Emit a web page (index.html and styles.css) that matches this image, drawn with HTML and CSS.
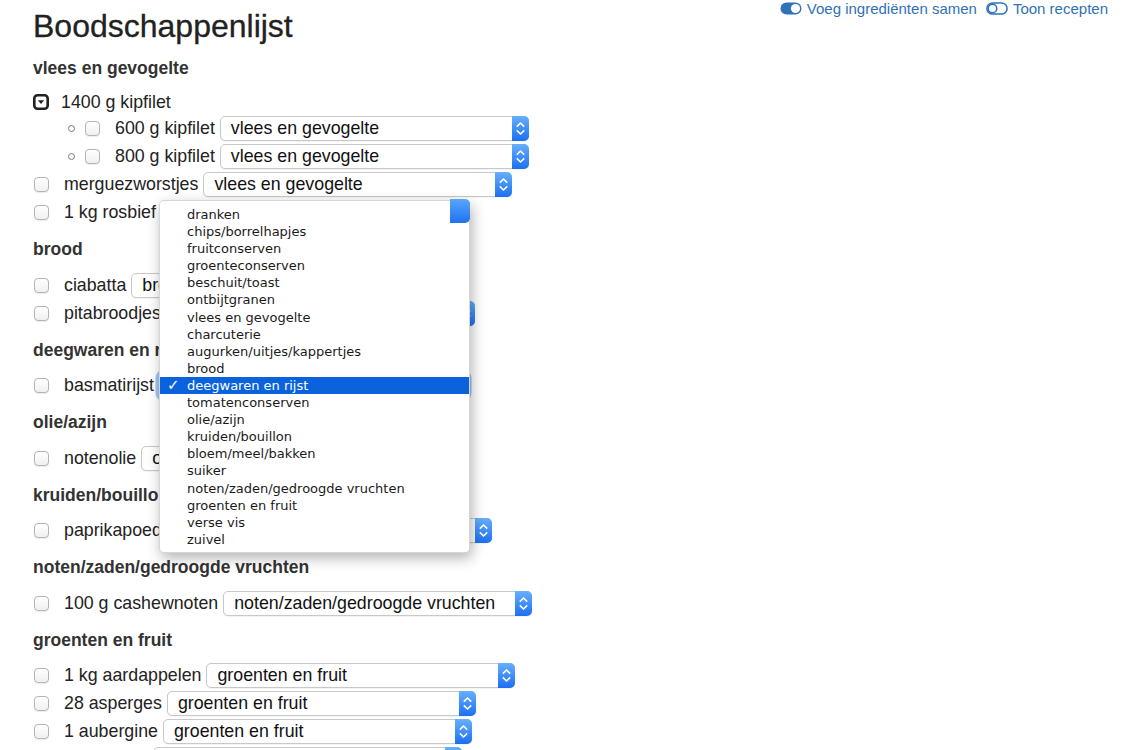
FILE: index.html
```html
<!DOCTYPE html>
<html lang="nl">
<head>
<meta charset="utf-8">
<title>Boodschappenlijst</title>
<link rel="stylesheet" href="styles.css">
</head>
<body>
<div class="page">
  <header class="top">
    <h1 class="title">Boodschappenlijst</h1>
    <div class="toggles">
      <span class="tg">
        <svg class="tg-icon" width="22" height="13" viewBox="0 0 22 13"><rect x="0.5" y="0.5" width="21" height="12" rx="6" fill="#3072b9"/><circle cx="15.5" cy="6.5" r="4.6" fill="#fff"/></svg>
        Voeg ingrediënten samen
      </span>
      <span class="tg">
        <svg class="tg-icon" width="22" height="13" viewBox="0 0 22 13"><rect x="0.9" y="0.9" width="20.2" height="11.2" rx="5.6" fill="none" stroke="#3072b9" stroke-width="1.5"/><circle cx="6.5" cy="6.5" r="4.3" fill="#fff" stroke="#3072b9" stroke-width="1.5"/></svg>
        Toon recepten
      </span>
    </div>
  </header>

  <section class="cat">
    <h2 class="cat-title">vlees en gevogelte</h2>
    <ul class="items">
      <li class="group">
        <div class="row head">
          <svg class="disc" width="16" height="16" viewBox="0 0 16 16"><rect x="1.3" y="1.3" width="13.4" height="13.4" rx="3.2" fill="none" stroke="#222" stroke-width="2.6"/><path d="M4.9 6.2 L11.1 6.2 L8 9.9 Z" fill="#222"/></svg>
          <span class="label">1400 g kipfilet</span>
        </div>
        <ul class="sub">
          <li class="row"><span class="cb"></span><span class="label">600 g kipfilet</span>
            <div class="select"><span class="val">vlees en gevogelte</span><span class="btn"><svg width="17" height="25" viewBox="0 0 17 25"><path d="M4.8 10.6 L8.5 7 L12.2 10.6 M4.8 14.4 L8.5 18 L12.2 14.4" fill="none" stroke="#fff" stroke-width="1.6"/></svg></span></div>
          </li>
          <li class="row"><span class="cb"></span><span class="label">800 g kipfilet</span>
            <div class="select"><span class="val">vlees en gevogelte</span><span class="btn"><svg width="17" height="25" viewBox="0 0 17 25"><path d="M4.8 10.6 L8.5 7 L12.2 10.6 M4.8 14.4 L8.5 18 L12.2 14.4" fill="none" stroke="#fff" stroke-width="1.6"/></svg></span></div>
          </li>
        </ul>
      </li>
      <li class="row"><span class="cb"></span><span class="label">merguezworstjes</span>
        <div class="select"><span class="val">vlees en gevogelte</span><span class="btn"><svg width="17" height="25" viewBox="0 0 17 25"><path d="M4.8 10.6 L8.5 7 L12.2 10.6 M4.8 14.4 L8.5 18 L12.2 14.4" fill="none" stroke="#fff" stroke-width="1.6"/></svg></span></div>
      </li>
      <li class="row"><span class="cb"></span><span class="label">1 kg rosbief</span>
        <div class="select"><span class="val">vlees en gevogelte</span><span class="btn"><svg width="17" height="25" viewBox="0 0 17 25"><path d="M4.8 10.6 L8.5 7 L12.2 10.6 M4.8 14.4 L8.5 18 L12.2 14.4" fill="none" stroke="#fff" stroke-width="1.6"/></svg></span></div>
      </li>
    </ul>
  </section>

  <section class="cat">
    <h2 class="cat-title">brood</h2>
    <ul class="items">
      <li class="row"><span class="cb"></span><span class="label">ciabatta</span>
        <div class="select"><span class="val">brood</span><span class="btn"><svg width="17" height="25" viewBox="0 0 17 25"><path d="M4.8 10.6 L8.5 7 L12.2 10.6 M4.8 14.4 L8.5 18 L12.2 14.4" fill="none" stroke="#fff" stroke-width="1.6"/></svg></span></div>
      </li>
      <li class="row"><span class="cb"></span><span class="label">pitabroodjes</span>
        <div class="select"><span class="val">brood</span><span class="btn"><svg width="17" height="25" viewBox="0 0 17 25"><path d="M4.8 10.6 L8.5 7 L12.2 10.6 M4.8 14.4 L8.5 18 L12.2 14.4" fill="none" stroke="#fff" stroke-width="1.6"/></svg></span></div>
      </li>
    </ul>
  </section>

  <section class="cat">
    <h2 class="cat-title">deegwaren en rijst</h2>
    <ul class="items">
      <li class="row"><span class="cb"></span><span class="label">basmatirijst</span>
        <div class="select focused"><span class="val">deegwaren en rijst</span><span class="btn"><svg width="17" height="25" viewBox="0 0 17 25"><path d="M4.8 10.6 L8.5 7 L12.2 10.6 M4.8 14.4 L8.5 18 L12.2 14.4" fill="none" stroke="#fff" stroke-width="1.6"/></svg></span></div>
      </li>
    </ul>
  </section>

  <section class="cat">
    <h2 class="cat-title">olie/azijn</h2>
    <ul class="items">
      <li class="row"><span class="cb"></span><span class="label">notenolie</span>
        <div class="select"><span class="val">olie/azijn</span><span class="btn"><svg width="17" height="25" viewBox="0 0 17 25"><path d="M4.8 10.6 L8.5 7 L12.2 10.6 M4.8 14.4 L8.5 18 L12.2 14.4" fill="none" stroke="#fff" stroke-width="1.6"/></svg></span></div>
      </li>
    </ul>
  </section>

  <section class="cat">
    <h2 class="cat-title">kruiden/bouillon</h2>
    <ul class="items">
      <li class="row"><span class="cb"></span><span class="label">paprikapoeder</span>
        <div class="select"><span class="val">kruiden/bouillon</span><span class="btn"><svg width="17" height="25" viewBox="0 0 17 25"><path d="M4.8 10.6 L8.5 7 L12.2 10.6 M4.8 14.4 L8.5 18 L12.2 14.4" fill="none" stroke="#fff" stroke-width="1.6"/></svg></span></div>
      </li>
    </ul>
  </section>

  <section class="cat">
    <h2 class="cat-title">noten/zaden/gedroogde vruchten</h2>
    <ul class="items">
      <li class="row"><span class="cb"></span><span class="label">100 g cashewnoten</span>
        <div class="select"><span class="val">noten/zaden/gedroogde vruchten</span><span class="btn"><svg width="17" height="25" viewBox="0 0 17 25"><path d="M4.8 10.6 L8.5 7 L12.2 10.6 M4.8 14.4 L8.5 18 L12.2 14.4" fill="none" stroke="#fff" stroke-width="1.6"/></svg></span></div>
      </li>
    </ul>
  </section>

  <section class="cat">
    <h2 class="cat-title">groenten en fruit</h2>
    <ul class="items">
      <li class="row"><span class="cb"></span><span class="label">1 kg aardappelen</span>
        <div class="select"><span class="val">groenten en fruit</span><span class="btn"><svg width="17" height="25" viewBox="0 0 17 25"><path d="M4.8 10.6 L8.5 7 L12.2 10.6 M4.8 14.4 L8.5 18 L12.2 14.4" fill="none" stroke="#fff" stroke-width="1.6"/></svg></span></div>
      </li>
      <li class="row"><span class="cb"></span><span class="label">28 asperges</span>
        <div class="select"><span class="val">groenten en fruit</span><span class="btn"><svg width="17" height="25" viewBox="0 0 17 25"><path d="M4.8 10.6 L8.5 7 L12.2 10.6 M4.8 14.4 L8.5 18 L12.2 14.4" fill="none" stroke="#fff" stroke-width="1.6"/></svg></span></div>
      </li>
      <li class="row"><span class="cb"></span><span class="label">1 aubergine</span>
        <div class="select"><span class="val">groenten en fruit</span><span class="btn"><svg width="17" height="25" viewBox="0 0 17 25"><path d="M4.8 10.6 L8.5 7 L12.2 10.6 M4.8 14.4 L8.5 18 L12.2 14.4" fill="none" stroke="#fff" stroke-width="1.6"/></svg></span></div>
      </li>
      <li class="row"><span class="cb"></span><span class="label">6 bananen</span>
        <div class="select"><span class="val">groenten en fruit</span><span class="btn"><svg width="17" height="25" viewBox="0 0 17 25"><path d="M4.8 10.6 L8.5 7 L12.2 10.6 M4.8 14.4 L8.5 18 L12.2 14.4" fill="none" stroke="#fff" stroke-width="1.6"/></svg></span></div>
      </li>
    </ul>
  </section>

  <div class="popup">
    <span class="ghost-btn"></span>
    <div class="opt">dranken</div>
    <div class="opt">chips/borrelhapjes</div>
    <div class="opt">fruitconserven</div>
    <div class="opt">groenteconserven</div>
    <div class="opt">beschuit/toast</div>
    <div class="opt">ontbijtgranen</div>
    <div class="opt">vlees en gevogelte</div>
    <div class="opt">charcuterie</div>
    <div class="opt">augurken/uitjes/kappertjes</div>
    <div class="opt">brood</div>
    <div class="opt sel"><span class="check">✓</span>deegwaren en rijst</div>
    <div class="opt">tomatenconserven</div>
    <div class="opt">olie/azijn</div>
    <div class="opt">kruiden/bouillon</div>
    <div class="opt">bloem/meel/bakken</div>
    <div class="opt">suiker</div>
    <div class="opt">noten/zaden/gedroogde vruchten</div>
    <div class="opt">groenten en fruit</div>
    <div class="opt">verse vis</div>
    <div class="opt">zuivel</div>
  </div>
</div>
</body>
</html>
```

FILE: styles.css
```css
html, body {
  margin: 0;
  padding: 0;
  overflow: hidden;
  background: #fff;
}

body {
  font-family: "Liberation Sans", Arial, Helvetica, sans-serif;
  color: #333;
}

.page {
  position: relative;
  padding: 0 17px 0 33px;
}

/* header */
.top {
  display: flex;
  justify-content: space-between;
  align-items: flex-start;
  padding-bottom: 1px;
}

.title {
  margin: 8px 0 0;
  font-size: 32px;
  line-height: 36px;
  font-weight: normal;
  color: #222;
  -webkit-text-stroke: 0.3px #222;
}

.toggles {
  display: flex;
  gap: 9px;
  font-size: 15px;
  line-height: 17px;
  color: #3072b9;
}

.tg {
  display: flex;
  align-items: center;
  gap: 5px;
  white-space: nowrap;
}

.tg-icon {
  display: block;
  flex: none;
}

/* categories */
.cat-title {
  margin: 12.5px 0 12px;
  font-size: 17.5px;
  line-height: 20px;
  font-weight: bold;
  color: #333;
}

.items,
.sub {
  list-style: none;
  margin: 0;
  padding: 0;
}

.row {
  display: flex;
  align-items: center;
  height: 28px;
  font-size: 17.8px;
  color: #222;
}

.row.head {
  height: 25px;
}

.disc {
  display: block;
  flex: none;
  margin-right: 12px;
}

.sub .row::before {
  content: "";
  flex: none;
  width: 7px;
  height: 7px;
  box-sizing: border-box;
  border: 1px solid #7a7a7a;
  border-radius: 50%;
  margin-left: 35px;
  margin-right: 9px;
}

.cb {
  flex: none;
  width: 15px;
  height: 15px;
  box-sizing: border-box;
  border: 1px solid #b4b4b4;
  border-radius: 4px;
  background: linear-gradient(#ffffff, #f0f0f0);
  box-shadow: 0 0.5px 1px rgba(0, 0, 0, 0.08);
  margin-left: 1px;
  margin-right: 15px;
}

.label {
  white-space: nowrap;
}

/* select control */
.select {
  flex: none;
  display: flex;
  align-items: center;
  width: 309px;
  height: 25px;
  box-sizing: border-box;
  margin-left: 5px;
  border: 1px solid #c8c8c8;
  border-radius: 5px;
  background: #fff;
  box-shadow: 0 1px 1px rgba(0, 0, 0, 0.05);
}

.select.focused {
  box-shadow: 0 0 0 3.5px rgba(96, 158, 240, 0.6);
}

.select .val {
  flex: 1;
  padding-left: 10px;
  font-size: 17.8px;
  color: #111;
  white-space: nowrap;
  overflow: hidden;
}

.select .btn {
  flex: none;
  align-self: stretch;
  width: 17px;
  margin: -1px -1px -1px 0;
  border-radius: 0 5px 5px 0;
  background: linear-gradient(#67b0fc, #1c6ff2);
  display: flex;
  align-items: center;
}

.select .btn svg {
  display: block;
}

/* open select popup menu */
.popup {
  position: absolute;
  left: 159px;
  top: 200px;
  width: 311px;
  box-sizing: border-box;
  padding: 5px 0 4px;
  background: #fff;
  border: 1px solid rgba(0, 0, 0, 0.16);
  border-radius: 5px;
  box-shadow: 2px 5px 14px rgba(0, 0, 0, 0.3);
  font-family: "DejaVu Sans", "Liberation Sans", sans-serif;
  font-size: 13px;
  color: #1a1a1a;
}

.ghost-btn {
  position: absolute;
  right: -1px;
  top: -2px;
  width: 20px;
  height: 24px;
  border-radius: 0 5px 5px 0;
  background: linear-gradient(#5aa6fb, #1f72f1);
}

.opt {
  height: 17.1px;
  line-height: 17.1px;
  padding-left: 27px;
  white-space: nowrap;
}

.opt.sel {
  background: #0a63dc;
  color: #fff;
  padding-left: 7px;
}

.check {
  display: inline-block;
  width: 20px;
  font-size: 15px;
  font-weight: bold;
}
```
